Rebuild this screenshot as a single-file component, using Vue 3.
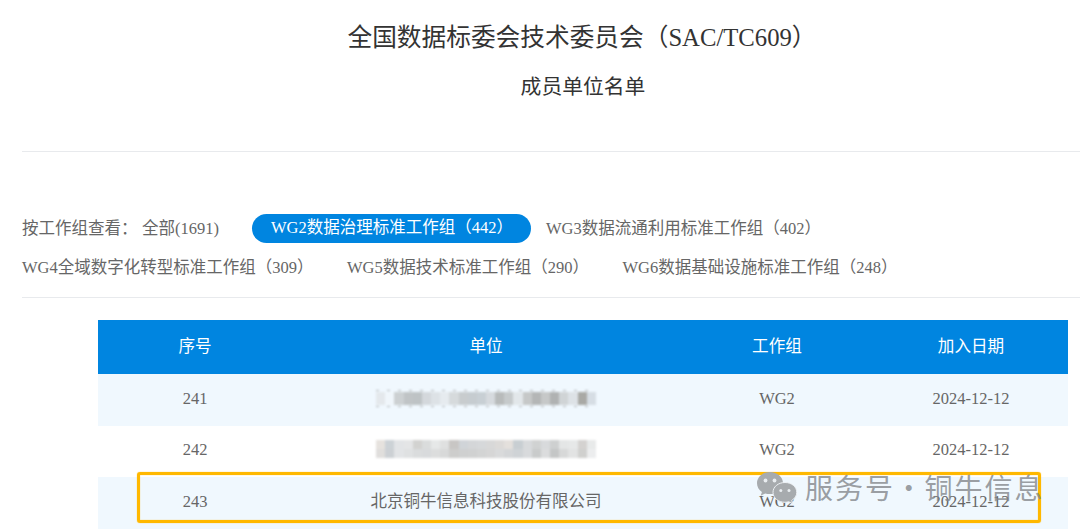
<script setup>
const firstRow = [
  { text: 'WG3数据流通利用标准工作组（402）', active: false }
]
const secondRow = [
  'WG4全域数字化转型标准工作组（309）',
  'WG5数据技术标准工作组（290）',
  'WG6数据基础设施标准工作组（248）'
]
const mosaicA = ['#e4e8ec','#f0f6fb','#ccd0d2','#c0c4c6','#bec3c5','#d4d8dc','#dde2e6','#e6ebef','#d6dadc','#c8ccce','#c6ccd0','#c8cfd4','#d6dade','#b8bbbb','#c6cacb','#e2e7ea','#c6c8c8','#b4b6b6','#c6c8c8','#b0b2b2','#d0d4d6','#dde2e6','#a9a9a5','#d6dde4']
const mosaicB = [
  ['#e6e2de','#ccd2d6','#e2e4e6','#e4e5e6','#d2d2d0','#dadcdc','#e6e8e8','#dfe0e0','#c8c6c4','#d0d4d8','#d4d6d8','#d6d8da','#d8d8d8','#dcdad8','#e4e0dc','#c8ced2','#d8dadc','#d0d2d2','#d8dadc','#ced0d0','#e4e6e6','#e6e8e8','#d4d2d0','#e8eaea'],
  ['#e0dedc','#ccd0d4','#e2e4e6','#dfe1e2','#dadcdd','#d8dadc','#dcdddd','#d8d9d9','#cdcdcc','#cfd0d0','#d0d1d1','#d3d4d4','#d6d6d6','#d9dadb','#d4d6d8','#cfd3d6','#d8dadc','#c9cbcb','#dbdcdd','#c4c6c6','#d7d8d8','#e2e3e3','#d0d0ce','#ecedee']
]
const rows = [
  { no: 241, mosaic: 'a', group: 'WG2', date: '2024-12-12' },
  { no: 242, mosaic: 'b', group: 'WG2', date: '2024-12-12' },
  { no: 243, name: '北京铜牛信息科技股份有限公司', group: 'WG2', date: '2024-12-12' }
]
</script>

<template>
  <div class="viewport">
    <div class="page">
      <header class="head">
        <h1 class="title">全国数据标委会技术委员会（SAC/TC609）</h1>
        <h2 class="subtitle">成员单位名单</h2>
      </header>

      <section class="filters">
        <div class="filter-row">
          <span class="label">按工作组查看：</span>
          <span class="all">全部(1691)</span>
          <span class="pill">WG2数据治理标准工作组（442）</span>
          <span v-for="item in firstRow" :key="item.text" class="wg3">{{ item.text }}</span>
        </div>
        <div class="filter-row second">
          <span v-for="item in secondRow" :key="item" class="wg">{{ item }}</span>
        </div>
      </section>

      <div class="table">
        <div class="tr th">
          <div>序号</div>
          <div>单位</div>
          <div>工作组</div>
          <div>加入日期</div>
        </div>
        <div v-for="row in rows" :key="row.no" class="tr td">
          <div>{{ row.no }}</div>
          <div>
            <span v-if="row.name">{{ row.name }}</span>
            <span v-else-if="row.mosaic === 'a'" class="mosaic one">
              <i v-for="(c, i) in mosaicA" :key="i" :style="{ background: c }"></i>
            </span>
            <span v-else class="mosaic two">
              <span v-for="(line, l) in mosaicB" :key="l" class="mosaic-line">
                <i v-for="(c, i) in line" :key="i" :style="{ background: c }"></i>
              </span>
            </span>
          </div>
          <div>{{ row.group }}</div>
          <div>{{ row.date }}</div>
        </div>
      </div>
    </div>

    <div class="highlight"></div>

    <div class="watermark">
      <svg class="wechat" width="40" height="32" viewBox="0 0 40 32" aria-hidden="true">
        <path d="M13 0C5.800 0 0 5 0 11.200c0 3.600 1.900 6.700 4.900 8.800l-1.200 3.800 4.500-2.400c1.500.4 3.100.7 4.800.7 7.200 0 13-5 13-10.900C26 5 20.200 0 13 0z" fill="#a7abae"/>
        <circle cx="8.500" cy="8.500" r="1.900" fill="#e9edf0"/>
        <circle cx="17.500" cy="8.500" r="1.900" fill="#e9edf0"/>
        <path d="M28 10.500c-6.800 0-12 4.400-12 9.900s5.200 9.900 12 9.900c1.300 0 2.600-.2 3.800-.5l4 2-1-3.400c3-1.900 5-4.700 5-8 0-5.500-5-9.900-11.800-9.900z" fill="#a7abae" stroke="#eef2f5" stroke-width="1"/>
        <circle cx="23.800" cy="18.500" r="1.500" fill="#e9edf0"/>
        <circle cx="32" cy="18.500" r="1.500" fill="#e9edf0"/>
      </svg>
      <span class="wm-text">服务号 · 铜牛信息</span>
    </div>
  </div>
</template>

<style>
html, body { margin: 0; overflow: hidden; background: #fff; }
</style>

<style scoped>
.viewport {
  position: relative;
  width: 1080px;
  height: 532px;
  overflow: hidden;
  background: #fff;
  font-family: "Liberation Serif", "Noto Sans CJK SC", serif;
  color: #666;
}
.page {
  width: 1120px;
  margin-left: 22px;
}
.head {
  height: 151px;
  border-bottom: 1px solid #e8eaed;
  text-align: center;
  overflow: hidden;
}
.title {
  margin: 20px 0 0;
  font-size: 24.7px;
  line-height: 35px;
  font-weight: 400;
  color: #333;
}
.subtitle {
  margin: 16px 0 0;
  padding-left: 2px;
  font-size: 20.8px;
  line-height: 32px;
  font-weight: 400;
  color: #333;
}
.filters {
  height: 146px;
  box-sizing: border-box;
  padding-top: 62px;
  border-bottom: 1px solid #e8eaed;
  font-size: 16.5px;
  line-height: 24px;
}
.filter-row {
  display: flex;
  align-items: center;
  height: 29px;
  white-space: nowrap;
}
.second {
  margin-top: 10px;
}
.label { width: 120px; }
.all { width: 110px; }
.pill {
  box-sizing: border-box;
  width: 279px;
  height: 29px;
  line-height: 28px;
  padding-left: 19px;
  border-radius: 15px;
  background: #0085e0;
  color: #fff;
}
.wg3 { margin-left: 15px; }
.wg { margin-right: 33.500px; }
.table {
  width: 970px;
  margin: 22px 0 0 76px;
}
.tr {
  display: grid;
  grid-template-columns: 2fr 4fr 2fr 2fr;
  text-align: center;
  line-height: 22px;
}
.tr > div {
  display: flex;
  align-items: center;
  justify-content: center;
}
.th {
  height: 54px;
  background: #0085e0;
  color: #fff;
  font-size: 16.6px;
}
.td {
  height: 51.5px;
  font-size: 16.5px;
  box-sizing: border-box;
  padding-bottom: 2px;
}
.td:nth-child(even) { background: #f0f8fe; }
.mosaic {
  position: relative;
  display: flex;
  filter: blur(0.9px);
}
.mosaic i {
  display: block;
  width: 9.17px;
}
.one {
  height: 13px;
}
.one::before,
.one::after {
  content: "";
  position: absolute;
  left: 0;
  right: 0;
  height: 1px;
  background: repeating-linear-gradient(90deg, #b4b6b8 0 3px, transparent 3px 11px);
}
.one::before { top: -2px; }
.one::after { bottom: -2px; }
.two {
  flex-direction: column;
  height: 18px;
  margin-top: -2px;
}
.mosaic-line {
  display: flex;
  height: 9px;
}
.highlight {
  position: absolute;
  left: 137px;
  top: 472px;
  width: 904px;
  height: 51px;
  box-sizing: border-box;
  border: 3px solid #ffb800;
  border-radius: 3px;
  box-shadow: 0 0 1px #ffb800, inset 0 0 1px #ffb800;
}
.watermark {
  position: absolute;
  left: 757px;
  top: 472px;
  display: flex;
  align-items: flex-start;
}
.wechat { flex: none; }
.wm-text {
  margin: -3px 0 0 8px;
  font-family: "Noto Sans CJK SC", sans-serif;
  font-size: 28px;
  line-height: 36px;
  letter-spacing: 2px;
  word-spacing: -8.500px;
  color: rgba(130, 134, 138, 0.8);
  white-space: nowrap;
}
</style>
